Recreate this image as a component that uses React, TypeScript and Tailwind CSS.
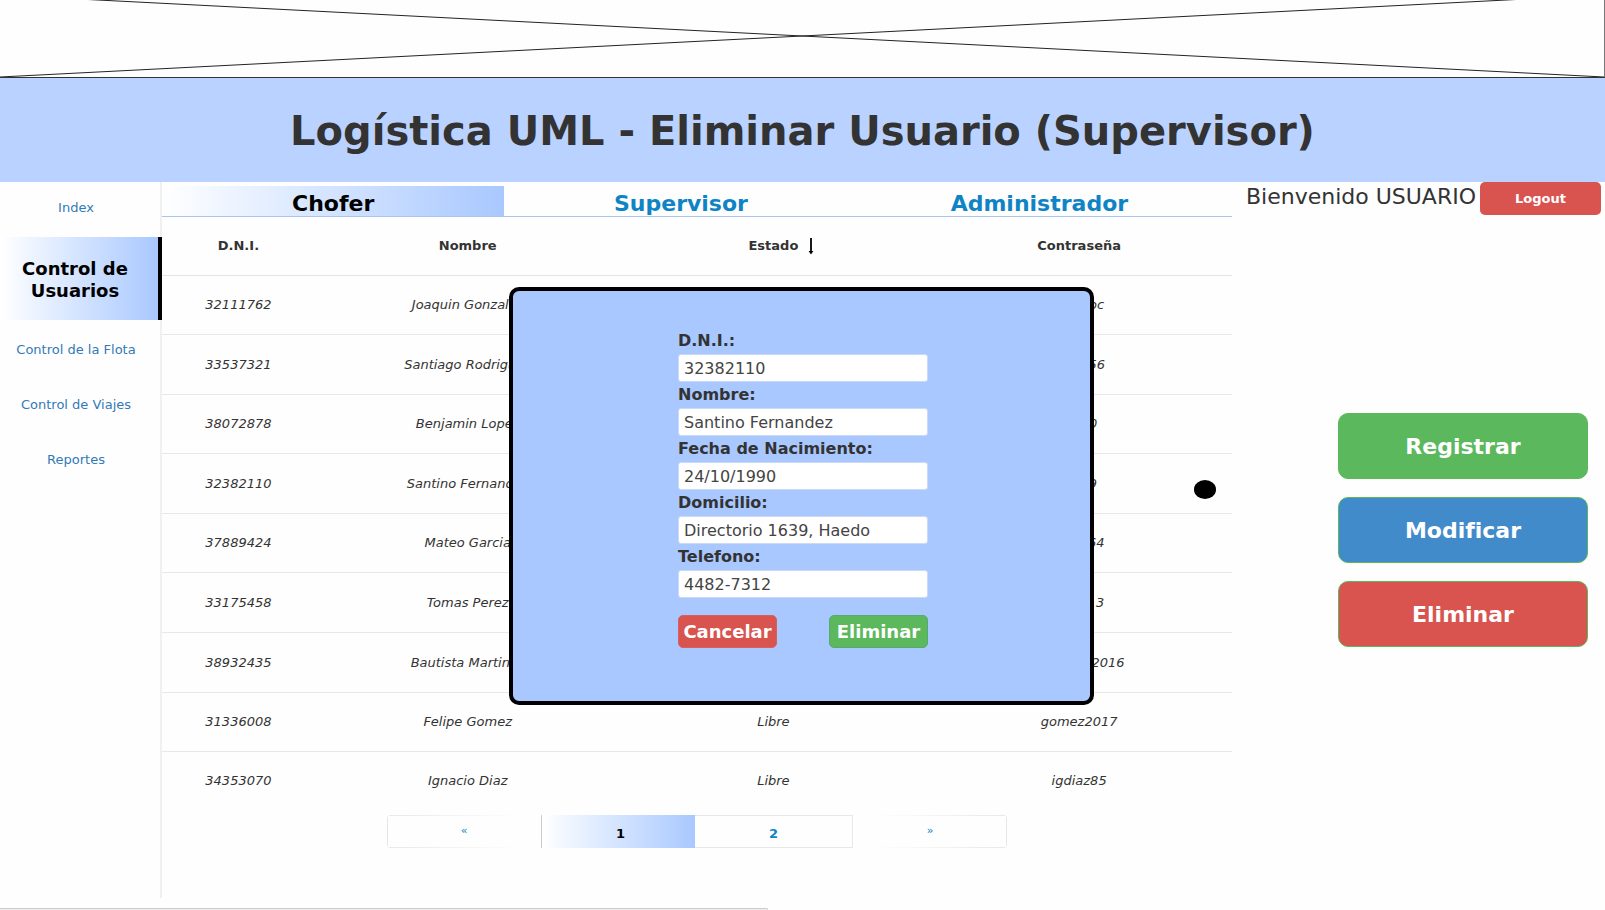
import React, { useState } from "react";

type Driver = { dni: string; name: string; status: string; password: string };

const drivers: Driver[] = [
  { dni: "32111762", name: "Joaquin Gonzalez", status: "Libre", password: "joacgoc" },
  { dni: "33537321", name: "Santiago Rodriguez", status: "Libre", password: "rodr656" },
  { dni: "38072878", name: "Benjamin Lopez", status: "Libre", password: "bej10" },
  { dni: "32382110", name: "Santino Fernandez", status: "Libre", password: "sanf9" },
  { dni: "37889424", name: "Mateo Garcia", status: "Libre", password: "mgar64" },
  { dni: "33175458", name: "Tomas Perez", status: "Libre", password: "tperz13" },
  { dni: "38932435", name: "Bautista Martinez", status: "Libre", password: "martinez2016" },
  { dni: "31336008", name: "Felipe Gomez", status: "Libre", password: "gomez2017" },
  { dni: "34353070", name: "Ignacio Diaz", status: "Libre", password: "igdiaz85" },
];

const fields = [
  { id: "dni", label: "D.N.I.:", value: "32382110" },
  { id: "nombre", label: "Nombre:", value: "Santino Fernandez" },
  { id: "nacimiento", label: "Fecha de Nacimiento:", value: "24/10/1990" },
  { id: "domicilio", label: "Domicilio:", value: "Directorio 1639, Haedo" },
  { id: "telefono", label: "Telefono:", value: "4482-7312" },
];

function Banner() {
  return (
    <div className="h-[77px] border-r border-[#777]">
      <svg className="block h-full w-full" viewBox="0 0 1605 77" preserveAspectRatio="none" aria-hidden="true">
        <path d="M0 -5 L1605 77 M0 77 L1605 -5" stroke="#222" strokeWidth="1" fill="none" />
      </svg>
    </div>
  );
}

function Sidebar() {
  return (
    <nav className="flex w-[162px] shrink-0 flex-col text-center text-[13px] text-[#337ab7]">
      <a href="#index" className="flex h-[55px] items-center justify-center border-r-2 border-[#f0f0f0] pr-2 pb-1">Index</a>
      <a
        href="#usuarios"
        className="flex h-[83px] items-center justify-center border-r-4 border-black bg-linear-to-r from-white to-[#a9c8ff] pt-0.5 pr-5 pl-3 text-[18px] leading-[22px] font-bold text-black"
      >
        Control de Usuarios
      </a>
      <div className="flex flex-1 flex-col border-r-2 border-[#f0f0f0] pt-0.5">
        <a href="#flota" className="flex h-[55px] items-center justify-center pr-2">Control de la Flota</a>
        <a href="#viajes" className="flex h-[55px] items-center justify-center pr-2">Control de Viajes</a>
        <a href="#reportes" className="flex h-[55px] items-center justify-center pr-2">Reportes</a>
      </div>
    </nav>
  );
}

function SortArrow() {
  return (
    <svg className="ml-1.5 inline-block" width="14" height="18" viewBox="0 0 14 18" aria-hidden="true">
      <path d="M7 1 V15" stroke="#000" strokeWidth="1.8" />
      <path d="M4.6 14 L7 17.6 L9.4 14 Z" fill="#000" />
    </svg>
  );
}

function Tabs() {
  const tab = "flex h-[30px] items-center justify-center pt-1 text-[22px] font-bold text-[#0f84c5]";
  return (
    <div className="mt-1 grid grid-cols-[32%_33%_34%] border-b border-[#a9c6ee]">
      <button type="button" className="flex h-[30px] items-center justify-center bg-linear-to-r from-white to-[#a9c8ff] pt-1 text-[22px] font-bold text-black">
        Chofer
      </button>
      <button type="button" className={tab}>Supervisor</button>
      <button type="button" className={tab}>Administrador</button>
    </div>
  );
}

function DriverTable() {
  return (
    <table className="h-[593px] w-full table-fixed border-collapse text-center text-[13px] text-[#333]">
      <colgroup>
        <col className="w-1/7" />
        <col className="w-2/7" />
        <col className="w-2/7" />
        <col className="w-2/7" />
      </colgroup>
      <thead>
        <tr className="h-[58px] border-b border-[#e4e4e4]">
          <th>D.N.I.</th>
          <th>Nombre</th>
          <th>
            <span className="inline-flex items-center pl-5">Estado<SortArrow /></span>
          </th>
          <th>Contraseña</th>
        </tr>
      </thead>
      <tbody className="italic">
        {drivers.map((d) => (
          <tr key={d.dni} className="border-b border-[#e8e8e8] last:border-b-0">
            <td>{d.dni}</td>
            <td>{d.name}</td>
            <td>{d.status}</td>
            <td className="relative">
              {d.password}
              {d.dni === "32382110" && (
                <span className="absolute top-[26px] right-4 h-[19px] w-[22px] rounded-[50%] bg-black" />
              )}
            </td>
          </tr>
        ))}
      </tbody>
    </table>
  );
}

function Pagination() {
  return (
    <div className="mt-[5px] flex h-[33px] justify-center text-[13px] text-[#0f84c5]">
      <div className="flex w-[620px]">
        <button type="button" aria-label="Anterior" className="w-[154px] rounded-l border-l border-[#e6e6e6] bg-linear-to-r from-[#e8e8e8] to-white to-90% p-px pl-0 text-[11px]">
          <span className="flex h-full items-center justify-center bg-[#fefefe]">«</span>
        </button>
        <button type="button" className="w-[154px] border-l border-[#ccc] bg-linear-to-r from-white to-[#a9c8ff] pt-1 pl-1 font-bold text-black">1</button>
        <button type="button" className="w-[158px] border border-l-0 border-[#e8e8e8] pt-1 font-bold">2</button>
        <button type="button" aria-label="Siguiente" className="w-[154px] rounded-r border-r border-[#e6e6e6] bg-linear-to-l from-[#e8e8e8] to-white to-90% p-px pr-0 text-[11px]">
          <span className="flex h-full items-center justify-center bg-[#fefefe]">»</span>
        </button>
      </div>
    </div>
  );
}

function Actions() {
  return (
    <aside className="flex w-[373px] shrink-0 flex-col">
      <div className="flex justify-end gap-1 pr-1 text-[22px] leading-[30px] text-[#333]">
        <span>Bienvenido USUARIO</span>
        <button type="button" className="h-[33px] w-[121px] rounded-[5px] bg-[#d9534f] text-[13px] font-bold text-white">Logout</button>
      </div>
      <div className="mt-[198px] flex flex-col items-end gap-[18px] pr-[17px] text-[22px] font-bold text-white">
        <button type="button" className="h-[66px] w-[250px] rounded-[10px] border border-[#5cb85c] bg-[#5cb85c]">Registrar</button>
        <button type="button" className="h-[66px] w-[250px] rounded-[10px] border border-[#5cb85c] bg-[#428bca]">Modificar</button>
        <button type="button" className="h-[66px] w-[250px] rounded-[10px] border border-[#5cb85c] bg-[#d9534f]">Eliminar</button>
      </div>
    </aside>
  );
}

function DeleteDialog() {
  const [values, setValues] = useState<Record<string, string>>(
    Object.fromEntries(fields.map((f) => [f.id, f.value])),
  );
  return (
    <div className="absolute inset-x-0 top-[287px] flex justify-center pr-[2px]">
      <form
        role="dialog"
        aria-label="Eliminar Usuario"
        onSubmit={(e) => e.preventDefault()}
        className="flex h-[418px] w-[585px] flex-col items-center rounded-[10px] border-4 border-black bg-[#a9c8ff] pt-[37px] pl-[3px] text-[16px] text-[#333]"
      >
        <div className="w-[250px]">
          {fields.map((f) => (
            <div key={f.id} className="flex flex-col">
              <label htmlFor={f.id} className="h-[26px] leading-[26px] font-bold">{f.label}</label>
              <input
                id={f.id}
                value={values[f.id]}
                onChange={(e) => setValues({ ...values, [f.id]: e.target.value })}
                className="h-[28px] w-full rounded-[3px] border border-[#ccd9f2] bg-white px-[5px] text-[#444]"
              />
            </div>
          ))}
          <div className="mt-[17px] flex justify-between text-[18px] font-bold text-white">
            <button type="button" className="h-[33px] w-[99px] rounded-[5px] border border-[#d4605f] bg-[#d9534f]">Cancelar</button>
            <button type="submit" className="h-[33px] w-[99px] rounded-[5px] border border-[#55aa70] bg-[#5cb85c]">Eliminar</button>
          </div>
        </div>
      </form>
    </div>
  );
}

export default function App() {
  return (
    <div className="relative flex min-h-screen flex-col bg-[#fefefe] font-['Verdana','DejaVu_Sans',sans-serif] [font-variant-ligatures:none]">
      <Banner />
      <header className="flex h-[105px] items-center justify-center border-t border-[#333] bg-[#bad2ff]">
        <h1 className="pt-px text-[40px] font-bold text-[#333]">Logística UML - Eliminar Usuario (Supervisor)</h1>
      </header>
      <div className="flex min-h-[716px]">
        <Sidebar />
        <main className="min-w-0 flex-1">
          <Tabs />
          <DriverTable />
          <Pagination />
        </main>
        <Actions />
      </div>
      <footer className="mt-[10px] h-[2px] w-[768px] rounded-tr border-t border-r border-[#ccc] bg-[#eee]" />
      <DeleteDialog />
    </div>
  );
}
